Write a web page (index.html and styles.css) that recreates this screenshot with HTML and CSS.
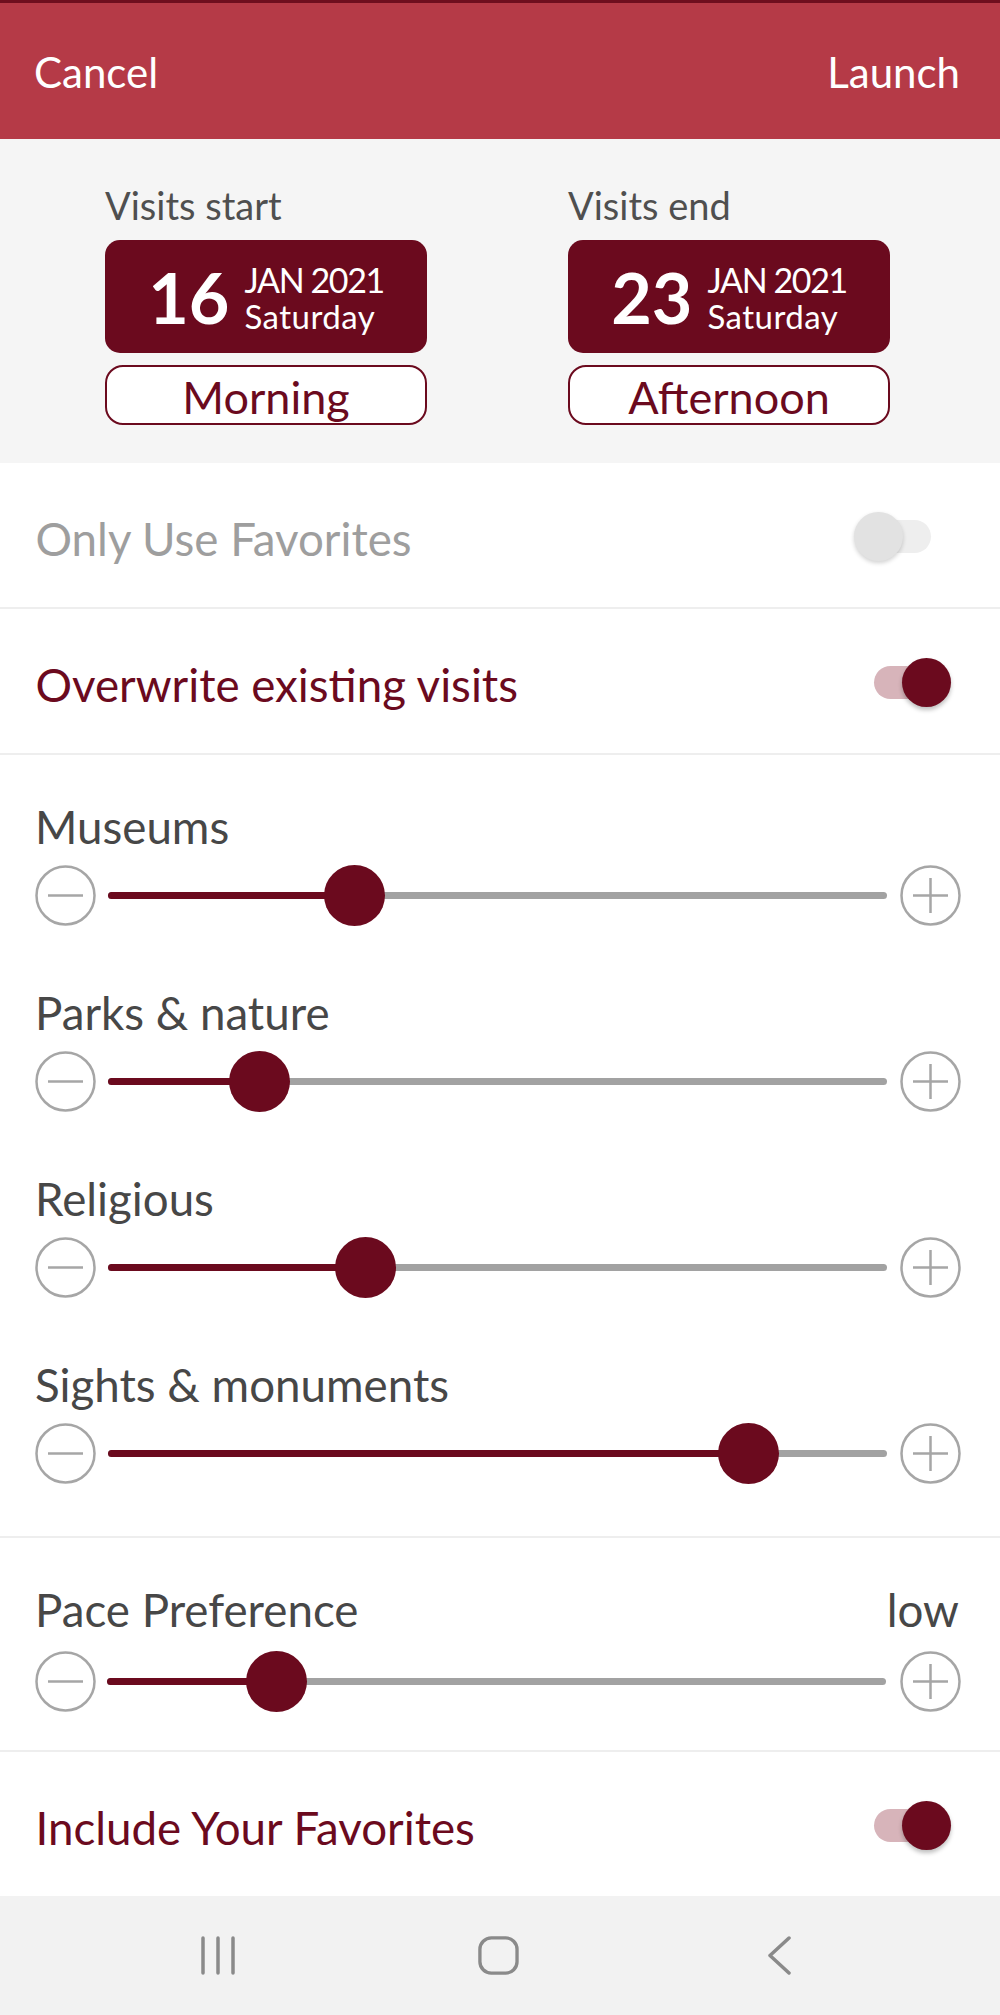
FILE: index.html
```html
<!DOCTYPE html>
<html lang="en">
<head>
<meta charset="utf-8">
<title>Plan visits</title>
<link rel="stylesheet" href="styles.css">
</head>
<body>
<div class="app">
  <header class="topbar">
    <span class="topbar-btn">Cancel</span>
    <span class="topbar-btn">Launch</span>
  </header>

  <section class="dates">
    <div class="date-col">
      <div class="date-label">Visits start</div>
      <div class="date-box">
        <span class="date-day">16</span>
        <span class="date-meta">
          <span class="date-month">JAN 2021</span>
          <span class="date-weekday">Saturday</span>
        </span>
      </div>
      <div class="period-btn">Morning</div>
    </div>
    <div class="date-col">
      <div class="date-label">Visits end</div>
      <div class="date-box">
        <span class="date-day">23</span>
        <span class="date-meta">
          <span class="date-month">JAN 2021</span>
          <span class="date-weekday">Saturday</span>
        </span>
      </div>
      <div class="period-btn">Afternoon</div>
    </div>
  </section>

  <div class="row row-divided">
    <span class="row-text row-text-disabled">Only Use Favorites</span>
    <div class="switch">
      <span class="switch-track"></span>
      <span class="switch-thumb"></span>
    </div>
  </div>

  <div class="row row-divided">
    <span class="row-text row-text-accent">Overwrite existing visits</span>
    <div class="switch switch-on">
      <span class="switch-track"></span>
      <span class="switch-thumb"></span>
    </div>
  </div>

  <section class="sliders row-divided">
    <div class="pref">
      <div class="pref-label">Museums</div>
      <div class="slider">
        <svg class="step" viewBox="0 0 61 61"><circle cx="30.5" cy="30.5" r="29" /><line x1="13" y1="30.5" x2="48" y2="30.5" /></svg>
        <div class="track"><div class="fill" style="width:31.6%"></div><div class="thumb" style="left:31.6%"></div></div>
        <svg class="step" viewBox="0 0 61 61"><circle cx="30.5" cy="30.5" r="29" /><line x1="13" y1="30.5" x2="48" y2="30.5" /><line x1="30.5" y1="13" x2="30.5" y2="48" /></svg>
      </div>
    </div>
    <div class="pref">
      <div class="pref-label">Parks &amp; nature</div>
      <div class="slider">
        <svg class="step" viewBox="0 0 61 61"><circle cx="30.5" cy="30.5" r="29" /><line x1="13" y1="30.5" x2="48" y2="30.5" /></svg>
        <div class="track"><div class="fill" style="width:19.4%"></div><div class="thumb" style="left:19.4%"></div></div>
        <svg class="step" viewBox="0 0 61 61"><circle cx="30.5" cy="30.5" r="29" /><line x1="13" y1="30.5" x2="48" y2="30.5" /><line x1="30.5" y1="13" x2="30.5" y2="48" /></svg>
      </div>
    </div>
    <div class="pref">
      <div class="pref-label">Religious</div>
      <div class="slider">
        <svg class="step" viewBox="0 0 61 61"><circle cx="30.5" cy="30.5" r="29" /><line x1="13" y1="30.5" x2="48" y2="30.5" /></svg>
        <div class="track"><div class="fill" style="width:33.1%"></div><div class="thumb" style="left:33.1%"></div></div>
        <svg class="step" viewBox="0 0 61 61"><circle cx="30.5" cy="30.5" r="29" /><line x1="13" y1="30.5" x2="48" y2="30.5" /><line x1="30.5" y1="13" x2="30.5" y2="48" /></svg>
      </div>
    </div>
    <div class="pref">
      <div class="pref-label">Sights &amp; monuments</div>
      <div class="slider">
        <svg class="step" viewBox="0 0 61 61"><circle cx="30.5" cy="30.5" r="29" /><line x1="13" y1="30.5" x2="48" y2="30.5" /></svg>
        <div class="track"><div class="fill" style="width:82.2%"></div><div class="thumb" style="left:82.2%"></div></div>
        <svg class="step" viewBox="0 0 61 61"><circle cx="30.5" cy="30.5" r="29" /><line x1="13" y1="30.5" x2="48" y2="30.5" /><line x1="30.5" y1="13" x2="30.5" y2="48" /></svg>
      </div>
    </div>
  </section>

  <section class="pace row-divided">
    <div class="pref-label pref-label-split">
      <span>Pace Preference</span>
      <span>low</span>
    </div>
    <div class="slider slider-pace">
      <svg class="step" viewBox="0 0 61 61"><circle cx="30.5" cy="30.5" r="29" /><line x1="13" y1="30.5" x2="48" y2="30.5" /></svg>
      <div class="track"><div class="fill" style="width:21.8%"></div><div class="thumb" style="left:21.8%"></div></div>
      <svg class="step" viewBox="0 0 61 61"><circle cx="30.5" cy="30.5" r="29" /><line x1="13" y1="30.5" x2="48" y2="30.5" /><line x1="30.5" y1="13" x2="30.5" y2="48" /></svg>
    </div>
  </section>

  <div class="row">
    <span class="row-text row-text-accent">Include Your Favorites</span>
    <div class="switch switch-on">
      <span class="switch-track"></span>
      <span class="switch-thumb"></span>
    </div>
  </div>

  <nav class="navbar">
    <span class="nav-slot">
      <svg class="nav-icon" viewBox="0 0 40 40"><line x1="5" y1="2" x2="5" y2="37" /><line x1="20" y1="2" x2="20" y2="37" /><line x1="35" y1="2" x2="35" y2="37" /></svg>
    </span>
    <span class="nav-slot">
      <svg class="nav-icon" viewBox="0 0 44 42"><rect x="2" y="2" width="39" height="37" rx="12" ry="12" /></svg>
    </span>
    <span class="nav-slot">
      <svg class="nav-icon" viewBox="0 0 26 40"><polyline points="22,2 3,19.5 22,37" /></svg>
    </span>
  </nav>
</div>
</body>
</html>
```
FILE: styles.css
```css
* { box-sizing: border-box; }

html, body {
  margin: 0;
  padding: 0;
  background: #ffffff;
}

body {
  font-family: "Lato", "Open Sans", sans-serif;
  color: #474747;
}

.app {
  width: 1000px;
  min-height: 2015px;
  display: flex;
  flex-direction: column;
}

/* Header */
.topbar {
  height: 139px;
  border-top: 3px solid #6e0e1e;
  background: #b53a47;
  display: flex;
  align-items: center;
  justify-content: space-between;
  padding: 2px 40px 0 34px;
}

.topbar-btn {
  color: #ffffff;
  font-size: 42px;
  line-height: 50px;
}

/* Dates */
.dates {
  background: #f5f5f5;
  height: 324px;
  display: flex;
  gap: 141px;
  padding: 43.5px 0 0 105px;
}

.date-col {
  width: 322px;
  display: flex;
  flex-direction: column;
}

.date-label {
  font-size: 38px;
  line-height: 45.6px;
  color: #4f4f4f;
  height: 45.6px;
  margin-bottom: 12px;
}

.date-box {
  height: 113px;
  border-radius: 15px;
  background: #6b0a1e;
  color: #ffffff;
  display: flex;
  align-items: center;
  justify-content: center;
  gap: 15px;
}

.date-day {
  font-size: 70px;
  font-weight: 700;
  line-height: 70px;
}

.date-meta {
  display: flex;
  flex-direction: column;
  padding-top: 4px;
}

.date-month {
  font-size: 34px;
  line-height: 34px;
  letter-spacing: -1.4px;
}

.date-weekday {
  font-size: 33px;
  line-height: 38px;
  letter-spacing: 0.5px;
}

.period-btn {
  margin-top: 12px;
  height: 60px;
  border: 2.5px solid #6b0a1e;
  border-radius: 18px;
  background: #ffffff;
  color: #6b0a1e;
  font-size: 45px;
  line-height: 49px;
  padding-top: 6px;
  text-align: center;
}

/* Toggle rows */
.row {
  height: 144px;
  display: flex;
  align-items: center;
  justify-content: space-between;
  padding: 2px 49px 0 35.5px;
}

.row-divided {
  border-bottom: 2px solid #eeeeee;
}

.row.row-divided {
  height: 146px;
}

.row-text {
  font-size: 45.7px;
  line-height: 54px;
  padding-top: 5px;
}

.row-text-disabled {
  color: #9e9e9e;
}

.row-text-accent {
  color: #6b0a1e;
}

.switch {
  position: relative;
  width: 97px;
  height: 49px;
}

.switch-track {
  position: absolute;
  left: 20px;
  top: 8px;
  width: 57px;
  height: 33px;
  border-radius: 17px;
  background: #eeeeee;
}

.switch-thumb {
  position: absolute;
  left: 0;
  top: 0;
  width: 49px;
  height: 49px;
  border-radius: 50%;
  background: #e2e2e2;
  box-shadow: 0 2px 4px rgba(0, 0, 0, 0.18);
}

.switch-on .switch-track {
  background: #d7b4ba;
}

.switch-on .switch-thumb {
  left: 48px;
  background: #6b0a1e;
  box-shadow: 0 3px 4px rgba(0, 0, 0, 0.25);
}

/* Sliders */
.sliders {
  height: 783px;
  padding-top: 45px;
  display: flex;
  flex-direction: column;
  gap: 60px;
}

.pref {
  display: flex;
  flex-direction: column;
  gap: 11px;
}

.pref-label {
  font-size: 45.7px;
  line-height: 54px;
  color: #474747;
  padding-left: 35px;
}

.pref-label-split {
  display: flex;
  justify-content: space-between;
  padding-right: 41px;
}

.slider {
  height: 61px;
  display: flex;
  align-items: center;
  padding: 0 39px 0 35px;
}

.step {
  width: 61px;
  height: 61px;
  flex: none;
  fill: none;
  stroke: #a6a6a6;
  stroke-width: 2.5;
}

.track {
  flex: 1;
  position: relative;
  height: 7px;
  margin: 0 13px 0 12px;
  border-radius: 4px;
  background: #a2a2a2;
}

.fill {
  height: 100%;
  border-radius: 4px;
  background: #6b0a1e;
}

.thumb {
  position: absolute;
  top: 50%;
  width: 61px;
  height: 61px;
  margin: -30.5px 0 0 -30.5px;
  border-radius: 50%;
  background: #6b0a1e;
}

.pace {
  height: 214px;
  padding-top: 44.5px;
  display: flex;
  flex-direction: column;
  gap: 14.5px;
}

.slider-pace .track {
  margin: 0 14px 0 11px;
}

/* Navigation bar */
.navbar {
  margin-top: auto;
  height: 119px;
  background: #f2f2f2;
  display: flex;
  align-items: center;
  padding: 0 0 0 77px;
}

.nav-slot {
  width: 281px;
  display: flex;
  justify-content: center;
}

.nav-icon {
  height: 40px;
  width: auto;
  fill: none;
  stroke: #8a8a8a;
  stroke-width: 3.5;
  stroke-linecap: round;
  stroke-linejoin: round;
}
```
